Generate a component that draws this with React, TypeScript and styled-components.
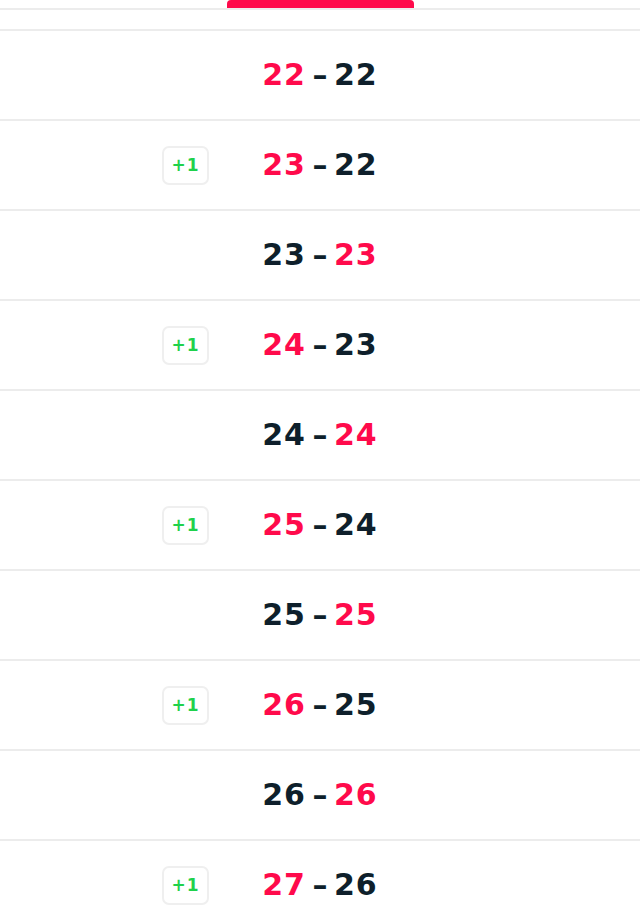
import React, { FC } from 'react'
import styled, { createGlobalStyle } from 'styled-components'

const GlobalStyle = createGlobalStyle`
	html, body {
		margin: 0;
		padding: 0;
		background: #ffffff;
		overflow: hidden;
	}
	* {
		box-sizing: border-box;
	}
`

const Page = styled.div`
	width: 640px;
	font-family: 'DejaVu Sans', 'Liberation Sans', sans-serif;
`

const TabBar = styled.div`
	display: flex;
	justify-content: center;
	height: 10px;
	border-bottom: 2px solid #ececec;
`

const Indicator = styled.div`
	width: 187px;
	height: 8px;
	background: #ff0a4b;
	border-radius: 4px 4px 0 0;
`

const List = styled.div`
	margin-top: 19px;
	border-top: 2px solid #ececec;
`

const Row = styled.div`
	display: grid;
	grid-template-columns: 1fr 116px 1fr;
	align-items: center;
	height: 90px;
	border-bottom: 2px solid #ececec;
`

const Side = styled.div`
	display: flex;
	justify-content: flex-end;
	padding-right: 53px;
`

const Badge = styled.div`
	display: flex;
	align-items: center;
	justify-content: center;
	width: 47px;
	height: 39px;
	border: 2px solid #efefef;
	border-radius: 7px;
	color: #1fd14c;
	font-size: 17px;
	font-weight: bold;
	letter-spacing: 1px;
`

const Score = styled.div`
	display: flex;
	align-items: center;
	font-size: 30px;
	font-weight: bold;
	line-height: 1;
	color: #0e1f2b;
`

const Goals = styled.span<{ $hot: boolean; $align: 'left' | 'right' }>`
	width: 44px;
	text-align: ${({ $align }) => $align};
	color: ${({ $hot }) => ($hot ? '#ff0a4b' : '#0e1f2b')};
	letter-spacing: 1px;
`

const Dash = styled.span`
	flex: 1;
	text-align: center;
`

interface Point {
	home: number
	away: number
	scorer: 'home' | 'away'
}

const points: Point[] = [
	{ home: 22, away: 22, scorer: 'home' },
	{ home: 23, away: 22, scorer: 'home' },
	{ home: 23, away: 23, scorer: 'away' },
	{ home: 24, away: 23, scorer: 'home' },
	{ home: 24, away: 24, scorer: 'away' },
	{ home: 25, away: 24, scorer: 'home' },
	{ home: 25, away: 25, scorer: 'away' },
	{ home: 26, away: 25, scorer: 'home' },
	{ home: 26, away: 26, scorer: 'away' },
	{ home: 27, away: 26, scorer: 'home' },
]

const ScoreRow: FC<{ point: Point }> = ({ point }) => {
	const lead = point.home - point.away
	return (
		<Row>
			<Side>{lead > 0 && <Badge>+{lead}</Badge>}</Side>
			<Score>
				<Goals $hot={point.scorer === 'home'} $align="right">
					{point.home}
				</Goals>
				<Dash>–</Dash>
				<Goals $hot={point.scorer === 'away'} $align="left">
					{point.away}
				</Goals>
			</Score>
			<div />
		</Row>
	)
}

export default function App() {
	return (
		<Page>
			<GlobalStyle />
			<TabBar>
				<Indicator />
			</TabBar>
			<List>
				{points.map((p, i) => (
					<ScoreRow key={i} point={p} />
				))}
			</List>
		</Page>
	)
}
